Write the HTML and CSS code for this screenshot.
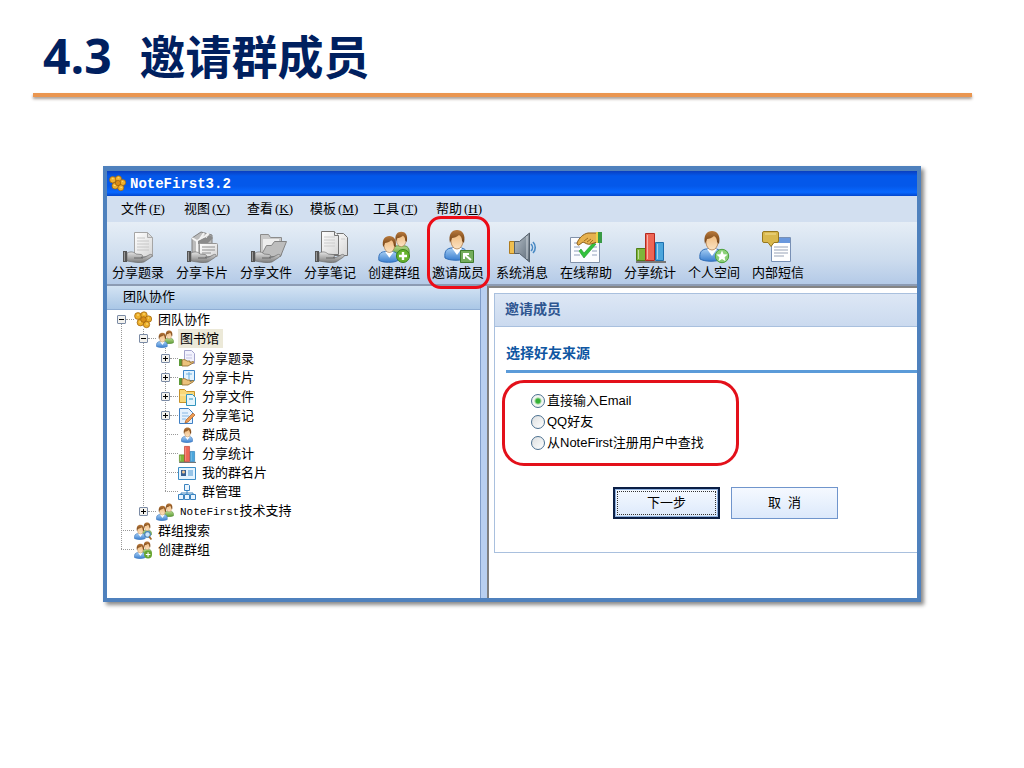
FILE: index.html
```html
<!DOCTYPE html>
<html lang="zh-CN">
<head>
    <meta charset="UTF-8">
    <meta name="viewport" content="width=device-width, initial-scale=1.0">
    <title>4.3 邀请群成员</title>
    <link rel="stylesheet" href="styles.css">
</head>
<body>
    <!-- shared icon shapes -->
    <svg class="sprite" width="0" height="0" aria-hidden="true">
        <defs>
            <linearGradient id="g-skin" x1="0" y1="0" x2="0" y2="1"><stop offset="0" stop-color="#f0b878"/><stop offset="1" stop-color="#fbe3c4"/></linearGradient>
            <linearGradient id="g-hair" x1="0" y1="0" x2="0" y2="1"><stop offset="0" stop-color="#b97a3c"/><stop offset="1" stop-color="#6b3c12"/></linearGradient>
            <linearGradient id="g-blue" x1="0" y1="0" x2="0" y2="1"><stop offset="0" stop-color="#a4ccf2"/><stop offset="1" stop-color="#3a7fd0"/></linearGradient>
            <linearGradient id="g-green" x1="0" y1="0" x2="0" y2="1"><stop offset="0" stop-color="#b5d98a"/><stop offset="1" stop-color="#5b9a35"/></linearGradient>
            <linearGradient id="g-steel" x1="0" y1="0" x2="1" y2="1"><stop offset="0" stop-color="#b9c2ca"/><stop offset="1" stop-color="#5c6a78"/></linearGradient>
            <linearGradient id="g-hand" x1="0" y1="0" x2="0" y2="1"><stop offset="0" stop-color="#e4e4e4"/><stop offset="1" stop-color="#7c7c7c"/></linearGradient>
            <linearGradient id="g-page" x1="0" y1="0" x2="1" y2="1"><stop offset="0" stop-color="#ffffff"/><stop offset="1" stop-color="#d6d6d6"/></linearGradient>
        </defs>
        <symbol id="hand" viewBox="0 0 32 32">
            <path d="M5 22c4-2 7-1 9 1l5 .5c2 .3 2 2.500 0 3h3l6-3c2-.6 3 1 1.500 2.500L22 31c-5 1.500-10 0-17-1z" fill="url(#g-hand)" stroke="#6e6e6e" stroke-width=".7"/>
            <path d="M12 27h9" stroke="#666" fill="none"/>
            <path d="M1 20h4v11H1z" fill="#555"/>
            <path d="M2 21h1v9H2z" fill="#999"/>
        </symbol>
        <symbol id="person" viewBox="2 0 24 32">
            <path d="M3 29c-1-7 2-10 7-10h8c5 0 8 3 7 10-5 3-17 3-22 0z" fill="url(#g-blue)" stroke="#2f6cb5"/>
            <path d="M10 19l5 7 5-7z" fill="#fff"/>
            <ellipse cx="15" cy="12" rx="6" ry="8" fill="url(#g-skin)" stroke="#a8703a" stroke-width=".7"/>
            <path d="M8 14C6 5 10 1 15 1s9 4 7 13l-2-2c0-3-1-5-3-6-2 2-5 3-7 3z" fill="url(#g-hair)"/>
        </symbol>
        <symbol id="person-green" viewBox="2 0 24 32">
            <path d="M3 29c-1-7 2-10 7-10h8c5 0 8 3 7 10-5 3-17 3-22 0z" fill="url(#g-green)" stroke="#4b862c"/>
            <ellipse cx="15" cy="12" rx="6" ry="8" fill="url(#g-skin)" stroke="#a8703a" stroke-width=".7"/>
            <path d="M8 14C6 5 10 1 15 1s9 4 7 13l-2-2c0-3-1-5-3-6-2 2-5 3-7 3z" fill="url(#g-hair)"/>
        </symbol>
        <symbol id="people" viewBox="0 0 32 32">
            <use href="#person-green" x="13" y="0" width="19" height="25"/>
            <use href="#person" x="0" y="4" width="21" height="28"/>
        </symbol>
        <symbol id="flower" viewBox="0 0 18 18">
            <g fill="#eeb02b" stroke="#9a5d08" stroke-width=".7">
                <circle cx="4" cy="5" r="3.400"/><circle cx="10" cy="4" r="3.200"/><circle cx="14.500" cy="8" r="3.200"/>
                <circle cx="12.500" cy="13.500" r="3.200"/><circle cx="6.500" cy="11.500" r="3.400"/><circle cx="9.500" cy="8.500" r="2.800" fill="#d98d17"/>
            </g>
            <path d="M3 4h2M9 3h2M14 7h1M12 13h2M5 11h2" stroke="#ffe28a"/>
        </symbol>
        <symbol id="bars" viewBox="0 0 32 32">
            <path d="M2 31h30" stroke="#777" stroke-width="2"/>
            <path d="M2.500 17.500h9v12h-9z" fill="#7fb53a" stroke="#4f7f18"/>
            <path d="M21.500 11.500h8v18h-8z" fill="#4ba6dc" stroke="#1d6fae"/>
            <path d="M11.500 2.500h9v27h-9z" fill="#ee6555" stroke="#b32a20"/>
            <path d="M13.500 4v24M4.500 19v9M23.500 13v15" stroke="#fff" opacity=".5"/>
        </symbol>
        <symbol id="share-small" viewBox="0 0 18 18">
            <path d="M1 9h3v7H1z" fill="#5c9a38"/>
            <path d="M4 10c2-1 4 0 5 1h3v1.500l3-1c1 0 1 1 0 1.500L10 16H4z" fill="#ecc27c" stroke="#8c6524" stroke-width=".8"/>
        </symbol>
    </svg>

    <header class="slide-title">
        <h1><span>4.3</span>邀请群成员</h1>
    </header>

    <main class="window">
        <div class="titlebar">
            <svg class="logo"><use href="#flower"/></svg>
            <span>NoteFirst3.2</span>
        </div>

        <nav class="menu">
            <button>文件<span>(<u>F</u>)</span></button>
            <button>视图<span>(<u>V</u>)</span></button>
            <button>查看<span>(<u>K</u>)</span></button>
            <button>模板<span>(<u>M</u>)</span></button>
            <button>工具<span>(<u>T</u>)</span></button>
            <button>帮助<span>(<u>H</u>)</span></button>
        </nav>

        <div class="toolbar">
            <button class="tool">
                <svg viewBox="0 0 32 32">
                    <path d="M12.500 1.500h13l5 5v19h-18z" fill="url(#g-page)" stroke="#a5a5a5"/>
                    <path d="M25.500 1.500v5h5z" fill="#ddd" stroke="#aaa"/>
                    <path d="M15 7h8M15 10h12M15 13h12M15 16h12M15 19h12" stroke="#c6c6c6"/>
                    <use href="#hand"/>
                </svg>
                分享题录
            </button>
            <button class="tool">
                <svg viewBox="0 0 32 32">
                    <path d="M6 7l9-6 11 3v8L20 24H6z" fill="#bcbcbc" stroke="#808080"/>
                    <path d="M6 7l5 3 12-7M11 10v12M14 8l4-6M18 7l4-5" stroke="#f3f3f3" stroke-width="2" fill="none"/>
                    <path d="M12 10l12-6 3 3-6 6h-9z" fill="#8b8b8b"/>
                    <path d="M15 8l3-5M20 7l3-5" stroke="#eee"/>
                    <rect x="13.500" y="12.500" width="18" height="13" rx="1" fill="url(#g-page)" stroke="#969696"/>
                    <path d="M16 16h13M16 19h13M16 22h9" stroke="#8e8e8e"/>
                    <use href="#hand"/>
                </svg>
                分享卡片
            </button>
            <button class="tool">
                <svg viewBox="0 0 32 32">
                    <path d="M10.500 24V3.500h8l2 3h11V24z" fill="#c9c9c9" stroke="#8c8c8c"/>
                    <path d="M13 8h16v13H13z" fill="#ededed"/>
                    <path d="M10.500 25.500l6-11h5l3-4h12l-6 15z" fill="#bdbdbd" stroke="#838383"/>
                    <use href="#hand"/>
                </svg>
                分享文件
            </button>
            <button class="tool">
                <svg viewBox="0 0 32 32">
                    <path d="M17.500 2.500h12l4 4v18h-16z" fill="url(#g-page)" stroke="#747474"/>
                    <path d="M7.500 .5h13l4 4v19h-17z" fill="url(#g-page)" stroke="#747474"/>
                    <path d="M20.500 .5v4h4" fill="#eee" stroke="#747474"/>
                    <path d="M10 6h11M10 9h11M10 12h11M10 15h11M27 8h4" stroke="#ccc"/>
                    <use href="#hand"/>
                </svg>
                分享笔记
            </button>
            <button class="tool">
                <svg viewBox="0 0 32 32">
                    <use href="#people"/>
                    <circle cx="25" cy="25" r="6.500" fill="#67b32e" stroke="#37821a"/>
                    <path d="M25 21v8M21 25h8" stroke="#fff" stroke-width="2.400"/>
                </svg>
                创建群组
            </button>
            <button class="tool marked">
                <svg viewBox="0 0 32 32">
                    <use href="#person" x="2" y="-2" width="24" height="32"/>
                    <path d="M18.500 19.500h13v12h-13z" fill="#74ad5c" stroke="#3f7b2d"/>
                    <path d="M22 28v-5h5M22 23l7 6" stroke="#fff" stroke-width="2" fill="none"/>
                </svg>
                邀请成员
            </button>
            <button class="tool">
                <svg viewBox="0 0 32 32">
                    <path d="M3.500 10.500h6v12h-6z" fill="#f0bf50" stroke="#b07c1f"/>
                    <path d="M8.500 10.500h5L23.500 2v29l-10-8.500h-5z" fill="url(#g-steel)" stroke="#55606b"/>
                    <path d="M21 5v23" stroke="#d3dae0"/>
                    <path d="M25 13c2 2 2 5 0 7M27 11c3 3 3 8 0 11" fill="none" stroke="#4a8ac4" stroke-width="1.600"/>
                </svg>
                系统消息
            </button>
            <button class="tool">
                <svg viewBox="0 0 32 32">
                    <path d="M.5 6.500h29v25H.5z" fill="#fbfcff" stroke="#8292aa"/>
                    <path d="M4 12h7M4 16h6M4 20h5M4 24h6M22 16h5M22 20h5M22 24h5" stroke="#91a0bc"/>
                    <path d="M9 20l5 7L26 13l-3-1-9 10-3-4z" fill="#31c23c" stroke="#209329" stroke-width=".6"/>
                    <path d="M7 12c2-5 6-9 11-10h9v9l-6 2c-4 1-5-1-8-2l-4 3c-1 .5-2-.5-2-2z" fill="#e6b14f" stroke="#8c5d17"/>
                    <path d="M14 10l4-3M17 11l4-3M20 12l3-3" stroke="#a06d1e"/>
                    <path d="M26 1h6v11h-6z" fill="#399a45"/><path d="M26 1h2v11h-2z" fill="#ead04c"/>
                </svg>
                在线帮助
            </button>
            <button class="tool">
                <svg viewBox="0 0 32 32"><use href="#bars"/></svg>
                分享统计
            </button>
            <button class="tool">
                <svg viewBox="0 0 32 32">
                    <use href="#person" x="1" y="-1" width="24" height="32"/>
                    <circle cx="24" cy="25" r="6.700" fill="#8bd078" stroke="#4da13c"/>
                    <path d="M24 19.500l1.600 3.700 4 .3-3 2.700.9 4-3.500-2.100-3.500 2.100.9-4-3-2.700 4-.3z" fill="#fff"/>
                </svg>
                个人空间
            </button>
            <button class="tool">
                <svg viewBox="-2 0 32 32">
                    <path d="M7.500 6.500h19v24h-19z" fill="#fff" stroke="#7890b5"/>
                    <path d="M8 7h18v5H8z" fill="#6a98dd"/>
                    <path d="M10 16h14M10 19h14M10 22h14M10 25h10" stroke="#98a3b7"/>
                    <path d="M0 .5h13q1.500 0 1.500 1.500v8q0 1.500-1.500 1.500h-3l-3 4-3-4H0q-1.500 0-1.500-1.500V2Q-1.500.5 0 .5z" fill="#d9b84d" stroke="#97781f"/>
                    <path d="M1 3h11" stroke="#f2df94"/>
                </svg>
                内部短信
            </button>
        </div>

        <div class="panes">
            <aside class="sidebar">
                <h2>团队协作</h2>
                <ul class="tree">
                    <li>
                        <div class="node"><button class="toggle minus" aria-label="收起"></button><svg viewBox="0 0 18 18"><use href="#flower"/></svg><span>团队协作</span></div>
                        <ul>
                            <li>
                                <div class="node selected"><button class="toggle minus" aria-label="收起"></button><svg><use href="#people"/></svg><span>图书馆</span></div>
                                <ul>
                                    <li><div class="node"><button class="toggle plus" aria-label="展开"></button>
                                        <svg viewBox="0 0 18 18"><path d="M6.500 .5h7l3 3v10h-10z" fill="#f2f2fd" stroke="#a3a3cc"/><path d="M8 5h6M8 8h6" stroke="#c3c3e2"/><use href="#share-small"/></svg><span>分享题录</span></div></li>
                                    <li><div class="node"><button class="toggle plus" aria-label="展开"></button>
                                        <svg viewBox="0 0 18 18"><path d="M5.500 1.500h11v10h-11z" fill="#e3f2fd" stroke="#3c86c9"/><path d="M8 5h6M11 3v7" stroke="#6bb0e2"/><use href="#share-small"/></svg><span>分享卡片</span></div></li>
                                    <li><div class="node"><button class="toggle plus" aria-label="展开"></button>
                                        <svg viewBox="0 0 18 18"><path d="M1.500 14.500v-13h5l2 2h8v11z" fill="#f9d878" stroke="#c6922a"/><path d="M2 7h14" stroke="#fff0bb"/><path d="M8.500 6.500h6l3 3v8h-9z" fill="#e5f5fd" stroke="#3295bd"/><path d="M11 11h4" stroke="#3295bd"/></svg><span>分享文件</span></div></li>
                                    <li><div class="node"><button class="toggle plus" aria-label="展开"></button>
                                        <svg viewBox="0 0 18 18"><path d="M1.500 1.500h9l4 4v11h-13z" fill="#e5f1fd" stroke="#3e7fc4"/><path d="M4 6h6M4 9h7M4 12h4" stroke="#86b7e4"/><path d="M7 16l1-3 7-7 2 2-7 7z" fill="#ee9b51" stroke="#a45d2a" stroke-width=".7"/></svg><span>分享笔记</span></div></li>
                                    <li><div class="node leaf"><svg><use href="#person" x="3" y="1" width="12" height="16"/></svg><span>群成员</span></div></li>
                                    <li><div class="node leaf"><svg><use href="#bars"/></svg><span>分享统计</span></div></li>
                                    <li><div class="node leaf"><svg viewBox="0 0 18 18"><path d="M.5 3.500h17v12H.5z" fill="#e5f4ff" stroke="#3c8cc6"/><path d="M3 6h5v6H3z" fill="#375f91"/><circle cx="5.500" cy="8" r="1.500" fill="#f4c894"/><path d="M10 7h5M10 9h5M10 11h5" stroke="#4893cf"/></svg><span>我的群名片</span></div></li>
                                    <li><div class="node leaf"><svg viewBox="0 0 18 18"><path d="M9 7v3M3 12v-2h12v2M9 10v2" stroke="#3a83bf" fill="none"/><g fill="#e9f5ff" stroke="#3a83bf"><path d="M6.500 1.500h4l1 1v5h-5z"/><path d="M.5 11.500h5v5h-5zM6.500 11.500h5v5h-5zM12.500 11.500h5v5h-5z"/></g></svg><span>群管理</span></div></li>
                                </ul>
                            </li>
                            <li><div class="node"><button class="toggle plus" aria-label="展开"></button><svg><use href="#people"/></svg><span><span class="mono">NoteFirst</span>技术支持</span></div></li>
                        </ul>
                    </li>
                    <li><div class="node leaf"><svg viewBox="0 0 32 32"><use href="#people"/><circle cx="24" cy="22" r="5" fill="#cfe7fa" stroke="#4582b9" stroke-width="2"/><path d="M27 26l4 5" stroke="#a06a28" stroke-width="3"/></svg><span>群组搜索</span></div></li>
                    <li><div class="node leaf"><svg viewBox="0 0 32 32"><use href="#people"/><circle cx="25" cy="24" r="7" fill="#67a52e"/><path d="M25 20v8M21 24h8" stroke="#fff" stroke-width="2"/></svg><span>创建群组</span></div></li>
                </ul>
            </aside>

            <section class="content">
                <form class="card" onsubmit="return false">
                    <h2>邀请成员</h2>
                    <div class="card-body">
                        <h3>选择好友来源</h3>
                        <fieldset class="sources">
                            <label><input type="radio" name="source" checked>直接输入Email</label>
                            <label><input type="radio" name="source">QQ好友</label>
                            <label><input type="radio" name="source">从NoteFirst注册用户中查找</label>
                        </fieldset>
                        <div class="actions">
                            <button class="btn primary"><span>下一步</span></button>
                            <button class="btn" type="button"><span>取&nbsp; 消</span></button>
                        </div>
                    </div>
                </form>
            </section>
        </div>
    </main>
</body>
</html>
```
FILE: styles.css
```css
* { box-sizing: border-box; }
body { margin: 0; min-height: 100vh; background: #fff; color: #000; font-family: "Liberation Sans", "Noto Sans CJK SC", sans-serif; font-size: 13px; }
button { font: inherit; color: inherit; background: none; border: 0; padding: 0; margin: 0; }
h1, h2, h3, ul { margin: 0; padding: 0; }
ul { list-style: none; }
svg { display: block; flex: none; overflow: visible; }
.sprite { overflow: hidden; }

/* slide heading */
.slide-title { margin: 0 52px 0 33px; padding-top: 19px; }
.slide-title h1 { padding-left: 10px; color: #00205f; font: bold 46px/74px "Open Sans", "Noto Sans CJK SC", sans-serif; }
.slide-title span { margin-right: 28px; font-size: 48px; }
.slide-title::after { content: ""; display: block; height: 4px; background: #ea9650; box-shadow: 0 2px 3px #a89c94; }

/* application window */
.window { margin: 69px 103px 48px; border: 4px solid #4f81bd; border-top-width: 5px; box-shadow: 3px 3px 4px #8a8a8a; }
.titlebar { display: flex; align-items: center; gap: 4px; height: 25px; padding-left: 2px; color: #fff; font: bold 14px/24px "Liberation Mono", monospace; background: linear-gradient(#0a3fc0, #0458ea 20%, #0458ea 60%, #0868ff 85%, #0346cc); }
.logo { width: 17px; height: 17px; }
.menu { display: flex; gap: 18px; height: 26px; padding-left: 14px; background: #d2dff0; }
.menu button { width: 45px; line-height: 26px; white-space: nowrap; text-align: left; }
.menu span { margin-left: 2px; font-family: "Liberation Serif", serif; }
.mono { font-family: "Liberation Mono", monospace; font-size: 11px; }

.toolbar { display: flex; gap: 2px; height: 64px; padding-top: 9px; border-bottom: 2px solid #8c9bb3; background: linear-gradient(#e6eef6, #cddcee 60%, #b4cae7); }
.tool { position: relative; display: flex; flex-direction: column; align-items: center; width: 62px; height: 52px; line-height: 20px; white-space: nowrap; }
.tool svg { width: 32px; height: 32px; }
.marked::after { content: ""; position: absolute; inset: -15px -1px -6px 0; border: 3px solid #ec0c16; border-radius: 14px; z-index: 1; }

.panes { display: flex; min-height: 312px; }
.sidebar { flex: 0 0 374px; border-right: 1px solid #7f9cc8; }
.sidebar h2 { height: 24px; padding-left: 16px; font-size: 13px; font-weight: normal; line-height: 22px; border-bottom: 1px solid #8faed4; background: linear-gradient(#d3e3f3, #aac7e6); }

/* dotted guides run behind the toggles */
.tree, .tree ul { background: repeating-linear-gradient(#999 0 1px, transparent 1px 2px) 4px 10px / 1px calc(100% - 19px) no-repeat; }
.tree { margin-left: 10px; }
.tree ul { padding: 0 0 0 22px; background-position: 26px 0; background-size: 1px calc(100% - 10px); }
.tree ul ul { padding: 1px 0 1px 22px; }
.node { display: flex; align-items: center; height: 19px; line-height: 19px; white-space: nowrap; }
.node svg { width: 18px; height: 18px; margin-right: 6px; }
.node::before { content: ""; order: 1; width: 8px; border-top: 1px dotted #999; }
.node svg, .node > span { order: 2; }
.leaf::before { width: 13px; margin-left: 4px; }
.selected > span { margin-left: -2px; padding: 0 4px 0 2px; background: #ece9d8; }
.toggle { width: 9px; height: 9px; border: 1px solid #7b8ba5; border-radius: 1px; }
.minus { background: linear-gradient(#000, #000) center / 5px 1px no-repeat, #f3f2ee; }
.plus { background: linear-gradient(#000, #000) center / 5px 1px no-repeat, linear-gradient(#000, #000) center / 1px 5px no-repeat, #f3f2ee; }

.content { flex: 1; min-width: 0; margin: 0 0 0 6px; padding: 5px 0 0 5px; border-left: 2px solid #7f7f7f; border-top: 2px solid #858585; box-shadow: -6px 0 0 #b8cff0; }
.card { border: 1px solid #a9c0de; border-right: 0; }
.card h2 { height: 33px; padding-left: 10px; color: #2e5590; font-size: 14px; line-height: 31px; border-bottom: 1px solid #a9c0de; background: linear-gradient(#dde7f5, #cbdaef); }
.card-body { padding: 0 0 33px 11px; }
.card h3 { padding-top: 11px; height: 46px; color: #0e56a2; font-size: 14px; line-height: 30px; border-bottom: 3px solid #5b9bd9; }
.sources { width: 237px; margin: 7px 0 0 -4px; padding: 6px 0 11px 26px; border: 3px solid #e3101a; border-radius: 22px; }
.sources label { display: flex; align-items: center; gap: 2px; height: 21px; white-space: nowrap; }
.sources input { appearance: none; flex: none; width: 14px; height: 14px; margin: 3px 0 0; border: 1px solid #4b7090; border-radius: 50%; background: linear-gradient(135deg, #dcdfe0, #fff); }
.sources input:checked { background: radial-gradient(circle, #35b135 0 2px, #9bd79b 3px, #f2f5f2 4px); }
.actions { display: flex; gap: 11px; padding: 21px 0 0 107px; }
.btn { width: 107px; height: 32px; padding: 2px; border: 1px solid #7095cc; background: linear-gradient(#f5f9ff, #dce9fb); }
.btn span { display: block; line-height: 24px; }
.primary { border: 2px solid #0b1f45; box-shadow: inset 0 0 0 1px #8eb1e0; }
.primary span { border: 1px dotted #333; line-height: 22px; }
```
